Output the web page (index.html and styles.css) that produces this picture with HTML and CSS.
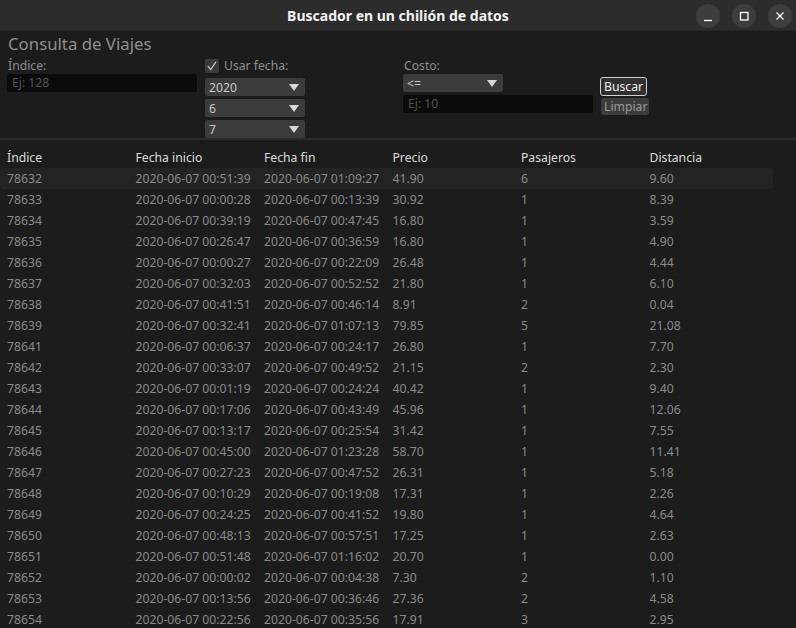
FILE: index.html
```html
<!DOCTYPE html>
<html lang="es">
<head>
<meta charset="utf-8">
<title>Buscador en un chilión de datos</title>
<link rel="stylesheet" href="styles.css">
</head>
<body>
<div class="window">
  <header class="titlebar">
    <div></div>
    <div class="title">Buscador en un chilión de datos</div>
    <div class="wbtns">
      <span class="wbtn"><svg width="24" height="24" viewBox="0 0 24 24"><path d="M8 16.5h8" stroke="#fff" stroke-width="1.3"/></svg></span>
      <span class="wbtn"><svg width="24" height="24" viewBox="0 0 24 24"><rect x="8.5" y="8.5" width="7.5" height="7.5" fill="none" stroke="#fff" stroke-width="1.3"/></svg></span>
      <span class="wbtn"><svg width="24" height="24" viewBox="0 0 24 24"><path d="M8.5 8.5l7 7M15.5 8.5l-7 7" stroke="#fff" stroke-width="1.3"/></svg></span>
    </div>
  </header>

  <section class="form">
    <h1 class="heading">Consulta de Viajes</h1>
    <div class="controls">
      <div class="col col-index">
        <label class="lbl">Índice:</label>
        <div class="input">Ej: 128</div>
      </div>
      <div class="col col-date">
        <div class="check-row">
          <span class="checkbox"><svg width="14" height="14" viewBox="0 0 14 14"><path d="M3 7.2l2.6 3.3L11 2.8" fill="none" stroke="#cfcfcf" stroke-width="1.2"/></svg></span>
          <span class="lbl">Usar fecha:</span>
        </div>
        <div class="select"><span>2020</span><i class="arrow"></i></div>
        <div class="select"><span>6</span><i class="arrow"></i></div>
        <div class="select"><span>7</span><i class="arrow"></i></div>
      </div>
      <div class="col col-cost">
        <label class="lbl">Costo:</label>
        <div class="select"><span>&lt;=</span><i class="arrow"></i></div>
        <div class="input">Ej: 10</div>
      </div>
      <div class="col col-btns">
        <button class="btn btn-primary">Buscar</button>
        <button class="btn btn-secondary">Limpiar</button>
      </div>
    </div>
  </section>

  <div class="sep"></div>

  <section class="table">
    <div class="row head"><span>Índice</span><span>Fecha inicio</span><span>Fecha fin</span><span>Precio</span><span>Pasajeros</span><span>Distancia</span></div>
    <div class="row hl"><span>78632</span><span>2020-06-07 00:51:39</span><span>2020-06-07 01:09:27</span><span>41.90</span><span>6</span><span>9.60</span></div>
    <div class="row"><span>78633</span><span>2020-06-07 00:00:28</span><span>2020-06-07 00:13:39</span><span>30.92</span><span>1</span><span>8.39</span></div>
    <div class="row"><span>78634</span><span>2020-06-07 00:39:19</span><span>2020-06-07 00:47:45</span><span>16.80</span><span>1</span><span>3.59</span></div>
    <div class="row"><span>78635</span><span>2020-06-07 00:26:47</span><span>2020-06-07 00:36:59</span><span>16.80</span><span>1</span><span>4.90</span></div>
    <div class="row"><span>78636</span><span>2020-06-07 00:00:27</span><span>2020-06-07 00:22:09</span><span>26.48</span><span>1</span><span>4.44</span></div>
    <div class="row"><span>78637</span><span>2020-06-07 00:32:03</span><span>2020-06-07 00:52:52</span><span>21.80</span><span>1</span><span>6.10</span></div>
    <div class="row"><span>78638</span><span>2020-06-07 00:41:51</span><span>2020-06-07 00:46:14</span><span>8.91</span><span>2</span><span>0.04</span></div>
    <div class="row"><span>78639</span><span>2020-06-07 00:32:41</span><span>2020-06-07 01:07:13</span><span>79.85</span><span>5</span><span>21.08</span></div>
    <div class="row"><span>78641</span><span>2020-06-07 00:06:37</span><span>2020-06-07 00:24:17</span><span>26.80</span><span>1</span><span>7.70</span></div>
    <div class="row"><span>78642</span><span>2020-06-07 00:33:07</span><span>2020-06-07 00:49:52</span><span>21.15</span><span>2</span><span>2.30</span></div>
    <div class="row"><span>78643</span><span>2020-06-07 00:01:19</span><span>2020-06-07 00:24:24</span><span>40.42</span><span>1</span><span>9.40</span></div>
    <div class="row"><span>78644</span><span>2020-06-07 00:17:06</span><span>2020-06-07 00:43:49</span><span>45.96</span><span>1</span><span>12.06</span></div>
    <div class="row"><span>78645</span><span>2020-06-07 00:13:17</span><span>2020-06-07 00:25:54</span><span>31.42</span><span>1</span><span>7.55</span></div>
    <div class="row"><span>78646</span><span>2020-06-07 00:45:00</span><span>2020-06-07 01:23:28</span><span>58.70</span><span>1</span><span>11.41</span></div>
    <div class="row"><span>78647</span><span>2020-06-07 00:27:23</span><span>2020-06-07 00:47:52</span><span>26.31</span><span>1</span><span>5.18</span></div>
    <div class="row"><span>78648</span><span>2020-06-07 00:10:29</span><span>2020-06-07 00:19:08</span><span>17.31</span><span>1</span><span>2.26</span></div>
    <div class="row"><span>78649</span><span>2020-06-07 00:24:25</span><span>2020-06-07 00:41:52</span><span>19.80</span><span>1</span><span>4.64</span></div>
    <div class="row"><span>78650</span><span>2020-06-07 00:48:13</span><span>2020-06-07 00:57:51</span><span>17.25</span><span>1</span><span>2.63</span></div>
    <div class="row"><span>78651</span><span>2020-06-07 00:51:48</span><span>2020-06-07 01:16:02</span><span>20.70</span><span>1</span><span>0.00</span></div>
    <div class="row"><span>78652</span><span>2020-06-07 00:00:02</span><span>2020-06-07 00:04:38</span><span>7.30</span><span>2</span><span>1.10</span></div>
    <div class="row"><span>78653</span><span>2020-06-07 00:13:56</span><span>2020-06-07 00:36:46</span><span>27.36</span><span>2</span><span>4.58</span></div>
    <div class="row"><span>78654</span><span>2020-06-07 00:22:56</span><span>2020-06-07 00:35:56</span><span>17.91</span><span>3</span><span>2.95</span></div>
  </section>
</div>
</body>
</html>
```

FILE: styles.css
```css
* { box-sizing: border-box; }
html, body { margin: 0; padding: 0; }
body {
  background: #1c1c1c;
  font-family: "Noto Sans", "Open Sans", sans-serif;
  font-size: 12.2px;
  color: #8a8a8a;
  overflow: hidden;
  width: 796px;
  height: 628px;
}
.titlebar {
  height: 31px;
  background: #2c2c2c;
  border-bottom: 1px solid #232323;
  display: grid;
  grid-template-columns: 1fr auto 1fr;
  align-items: center;
}
.title {
  color: #f2f2f2;
  font-weight: bold;
  font-size: 14px;
}
.wbtns {
  justify-self: end;
  display: flex;
  gap: 12px;
  padding-right: 4px;
  padding-top: 1px;
}
.wbtn {
  width: 24px;
  height: 24px;
  border-radius: 50%;
  background: #3d3d3d;
  display: block;
}
.wbtn svg { display: block; }

.form { padding: 0 0 0 7px; height: 107px; }
.heading {
  margin: 0;
  font-weight: normal;
  font-size: 16.8px;
  color: #8f8f8f;
  line-height: 25px;
  padding-left: 1px;
}
.controls { display: flex; align-items: flex-start; margin-top: 1px; }
.col { display: flex; flex-direction: column; }
.lbl { color: #8f8f8f; line-height: 17px; padding-left: 1px; }
.col-index { width: 190px; }
.input {
  height: 18px;
  background: #0b0b0b;
  border-radius: 2px;
  color: #525252;
  line-height: 18px;
  padding-left: 5px;
}
.col-date { width: 100px; margin-left: 8px; gap: 3px; }
.check-row { display: flex; align-items: center; gap: 4px; height: 17px; margin-bottom: 1px; }
.checkbox {
  width: 14px; height: 14px;
  background: #3c3c3c;
  border-radius: 2px;
  display: block;
}
.checkbox svg { display: block; }
.select {
  height: 18px;
  background: #3c3c3c;
  border-radius: 2px;
  display: flex;
  align-items: center;
  justify-content: space-between;
  padding: 0 6px 0 4px;
  color: #c8c8c8;
}
.arrow {
  width: 0; height: 0;
  border-left: 5.5px solid transparent;
  border-right: 5.5px solid transparent;
  border-top: 7px solid #d8d8d8;
}
.col-cost { width: 190px; margin-left: 98px; gap: 3px; }
.col-cost .lbl { margin-bottom: -3px; }
.col-cost .select { width: 100px; }
.col-btns { margin-left: 7px; margin-top: 20px; gap: 2px; align-items: flex-start; }
.btn {
  font-family: inherit;
  font-size: 12.2px;
  line-height: 16px;
  border-radius: 3px;
  padding: 0 3px;
  margin: 0;
  cursor: pointer;
}
.btn-primary {
  background: #303030;
  color: #f0f0f0;
  border: 1px solid #d0d0d0;
  height: 19px;
  width: 47px;
}
.btn-secondary {
  background: #3c3c3c;
  color: #9a9a9a;
  border: none;
  height: 17px;
  margin-left: 1px;
  width: 48px;
  padding: 0 3px;
}

.sep { height: 2px; background: #2a2a2a; }

.table { padding-top: 7px; width: 773px; }
.row {
  display: grid;
  grid-template-columns: repeat(6, 128.5px);
  height: 21px;
  line-height: 21px;
  white-space: nowrap;
}
.row span { padding-left: 7px; }
.row.head { color: #dcdcdc; }
.row.hl { background: #232323; border-radius: 3px; }
```
